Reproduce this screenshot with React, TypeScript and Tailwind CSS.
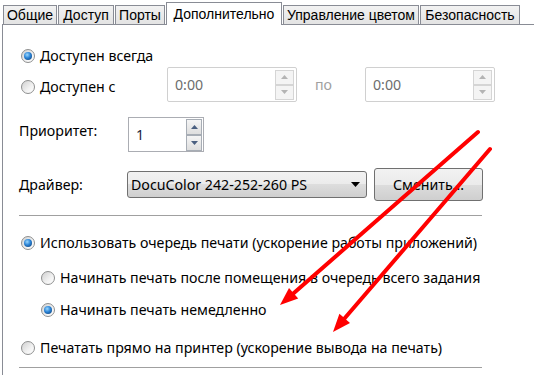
import React from "react";

type RadioProps = { checked?: boolean };

function Radio({ checked }: RadioProps) {
    return (
        <span className="flex h-[14px] w-[14px] shrink-0 items-center justify-center rounded-full border border-[#8e8f8f] bg-[linear-gradient(135deg,#d0d0d0,#f2f2f2_60%,#ffffff)]">
            {checked && (
                <span className="h-[8px] w-[8px] rounded-full bg-[radial-gradient(circle_at_40%_35%,#9ad8ff,#2a83d6_45%,#0c3566)]" />
            )}
        </span>
    );
}

function Option({ checked, label, indent }: { checked?: boolean; label: string; indent?: boolean }) {
    return (
        <div className={indent ? "flex h-[20px] items-center gap-[5px] pl-[22px]" : "flex h-[20px] items-center gap-[5px] pl-[2px]"}>
            <Radio checked={checked} />
            <span>{label}</span>
        </div>
    );
}

function SpinButtons({ disabled }: { disabled?: boolean }) {
    const btn = disabled
        ? "flex h-[15px] w-[19px] items-center justify-center border border-[#d5d5d5] bg-[#f4f4f4]"
        : "flex h-[16px] w-[16px] items-center justify-center border border-[#a7adb5] bg-[linear-gradient(#f5f5f5,#dedede)]";
    const tri = disabled ? "#b4b4b4" : "#4a5f80";
    return (
        <div className="flex flex-col">
            <span className={btn}>
                <svg width="7" height="4" viewBox="0 0 7 4">
                    <path d="M0 4 L3.5 0 L7 4 Z" fill={tri} />
                </svg>
            </span>
            <span className={btn}>
                <svg width="7" height="4" viewBox="0 0 7 4">
                    <path d="M0 0 L3.5 4 L7 0 Z" fill={tri} />
                </svg>
            </span>
        </div>
    );
}

function TimeBox() {
    return (
        <div className="flex h-[35px] w-[130px] items-center justify-between rounded-[2px] border border-[#d0d0d0] bg-white pl-[7px] pr-[2px]">
            <span className="text-[#6d6d6d]">0:00</span>
            <SpinButtons disabled />
        </div>
    );
}

const tabs = ["Общие", "Доступ", "Порты", "Дополнительно", "Управление цветом", "Безопасность"];
const tabWidths = ["w-[54px]", "w-[56px]", "w-[50px]", "w-[116px]", "w-[136px]", "w-[100px]"];

export default function App() {
    return (
        <div className="relative h-[375px] w-[534px] overflow-hidden bg-white font-['Noto_Sans',sans-serif] text-[14.2px] text-black">
            <div className="flex h-[24px] items-end gap-px pl-[3px]">
                {tabs.map((t, i) =>
                    i === 3 ? (
                        <div
                            key={t}
                            className={`${tabWidths[i]} relative z-10 -mb-px flex h-[23px] items-start justify-center border border-b-0 border-[#898c95] bg-white pt-[1px] font-['Liberation_Sans',sans-serif] text-[14px]`}
                        >
                            {t}
                        </div>
                    ) : (
                        <div
                            key={t}
                            className={`${tabWidths[i]} flex h-[19px] items-center justify-center border border-b-0 border-[#898c95] bg-[linear-gradient(#f2f2f2,#e3e3e3)] font-['Liberation_Sans',sans-serif] text-[14px]`}
                        >
                            {t}
                        </div>
                    ),
                )}
            </div>

            <div className="ml-[2px] h-[351px] border-l border-t border-[#898c95] pl-[16px] pt-[21px]">
                <Option checked label="Доступен всегда" />

                <div className="mt-[1px] flex h-[35px] items-center">
                    <div className="flex w-[148px] items-center gap-[5px] pl-[2px] pt-[5px]">
                        <Radio />
                        <span>Доступен с</span>
                    </div>
                    <TimeBox />
                    <span className="w-[68px] pl-[18px] text-[#a0a0a0]">по</span>
                    <TimeBox />
                </div>

                <div className="mt-[15px] flex h-[35px] items-center">
                    <span className="w-[109px] pb-[8px]">Приоритет:</span>
                    <div className="flex h-[35px] w-[76px] items-center justify-between border border-[#abadb3] pl-[7px] pr-[1px]">
                        <span className="text-[#1c1c40]">1</span>
                        <SpinButtons />
                    </div>
                </div>

                <div className="mt-[16px] flex h-[33px] items-center">
                    <span className="w-[108px]">Драйвер:</span>
                    <div className="flex h-[27px] w-[240px] items-center justify-between rounded-[3px] border border-[#707070] bg-[linear-gradient(#f2f2f2,#ebebeb_50%,#dddddd_50%,#cfcfcf)] pl-[3px] pr-[6px]">
                        <span>DocuColor 242-252-260 PS</span>
                        <svg width="9" height="5" viewBox="0 0 9 5">
                            <path d="M0 0 L9 0 L4.5 5 Z" fill="#000" />
                        </svg>
                    </div>
                    <div className="ml-[7px] flex h-[33px] w-[109px] items-center justify-center rounded-[3px] border border-[#707070] bg-[linear-gradient(#f2f2f2,#ebebeb_50%,#dddddd_50%,#cfcfcf)]">
                        Сменить...
                    </div>
                </div>

                <div className="mt-[14px] h-px w-[463px] bg-[#a0a0a0]" />

                <div className="mt-[17px]">
                    <Option checked label="Использовать очередь печати (ускорение работы приложений)" />
                </div>
                <div className="mt-[15px]">
                    <Option indent label="Начинать печать после помещения в очередь всего задания" />
                </div>
                <div className="mt-[12px]">
                    <Option indent checked label="Начинать печать немедленно" />
                </div>
                <div className="mt-[18px]">
                    <Option label="Печатать прямо на принтер (ускорение вывода на печать)" />
                </div>

                <div className="mt-[9px] h-px w-[463px] bg-[#a0a0a0]" />
            </div>

            <svg className="pointer-events-none absolute inset-0" width="534" height="375" viewBox="0 0 534 375">
                <line x1="478" y1="132" x2="293.6" y2="293.2" stroke="#ff0000" strokeWidth="4" strokeLinecap="round" />
                <path d="M280 305 L298.2 298.5 L289 287.9 Z" fill="#ff0000" />
                <line x1="490" y1="149" x2="344.7" y2="318.3" stroke="#ff0000" strokeWidth="4" strokeLinecap="round" />
                <path d="M333 332 L350 322.9 L339.4 313.7 Z" fill="#ff0000" />
            </svg>
        </div>
    );
}
